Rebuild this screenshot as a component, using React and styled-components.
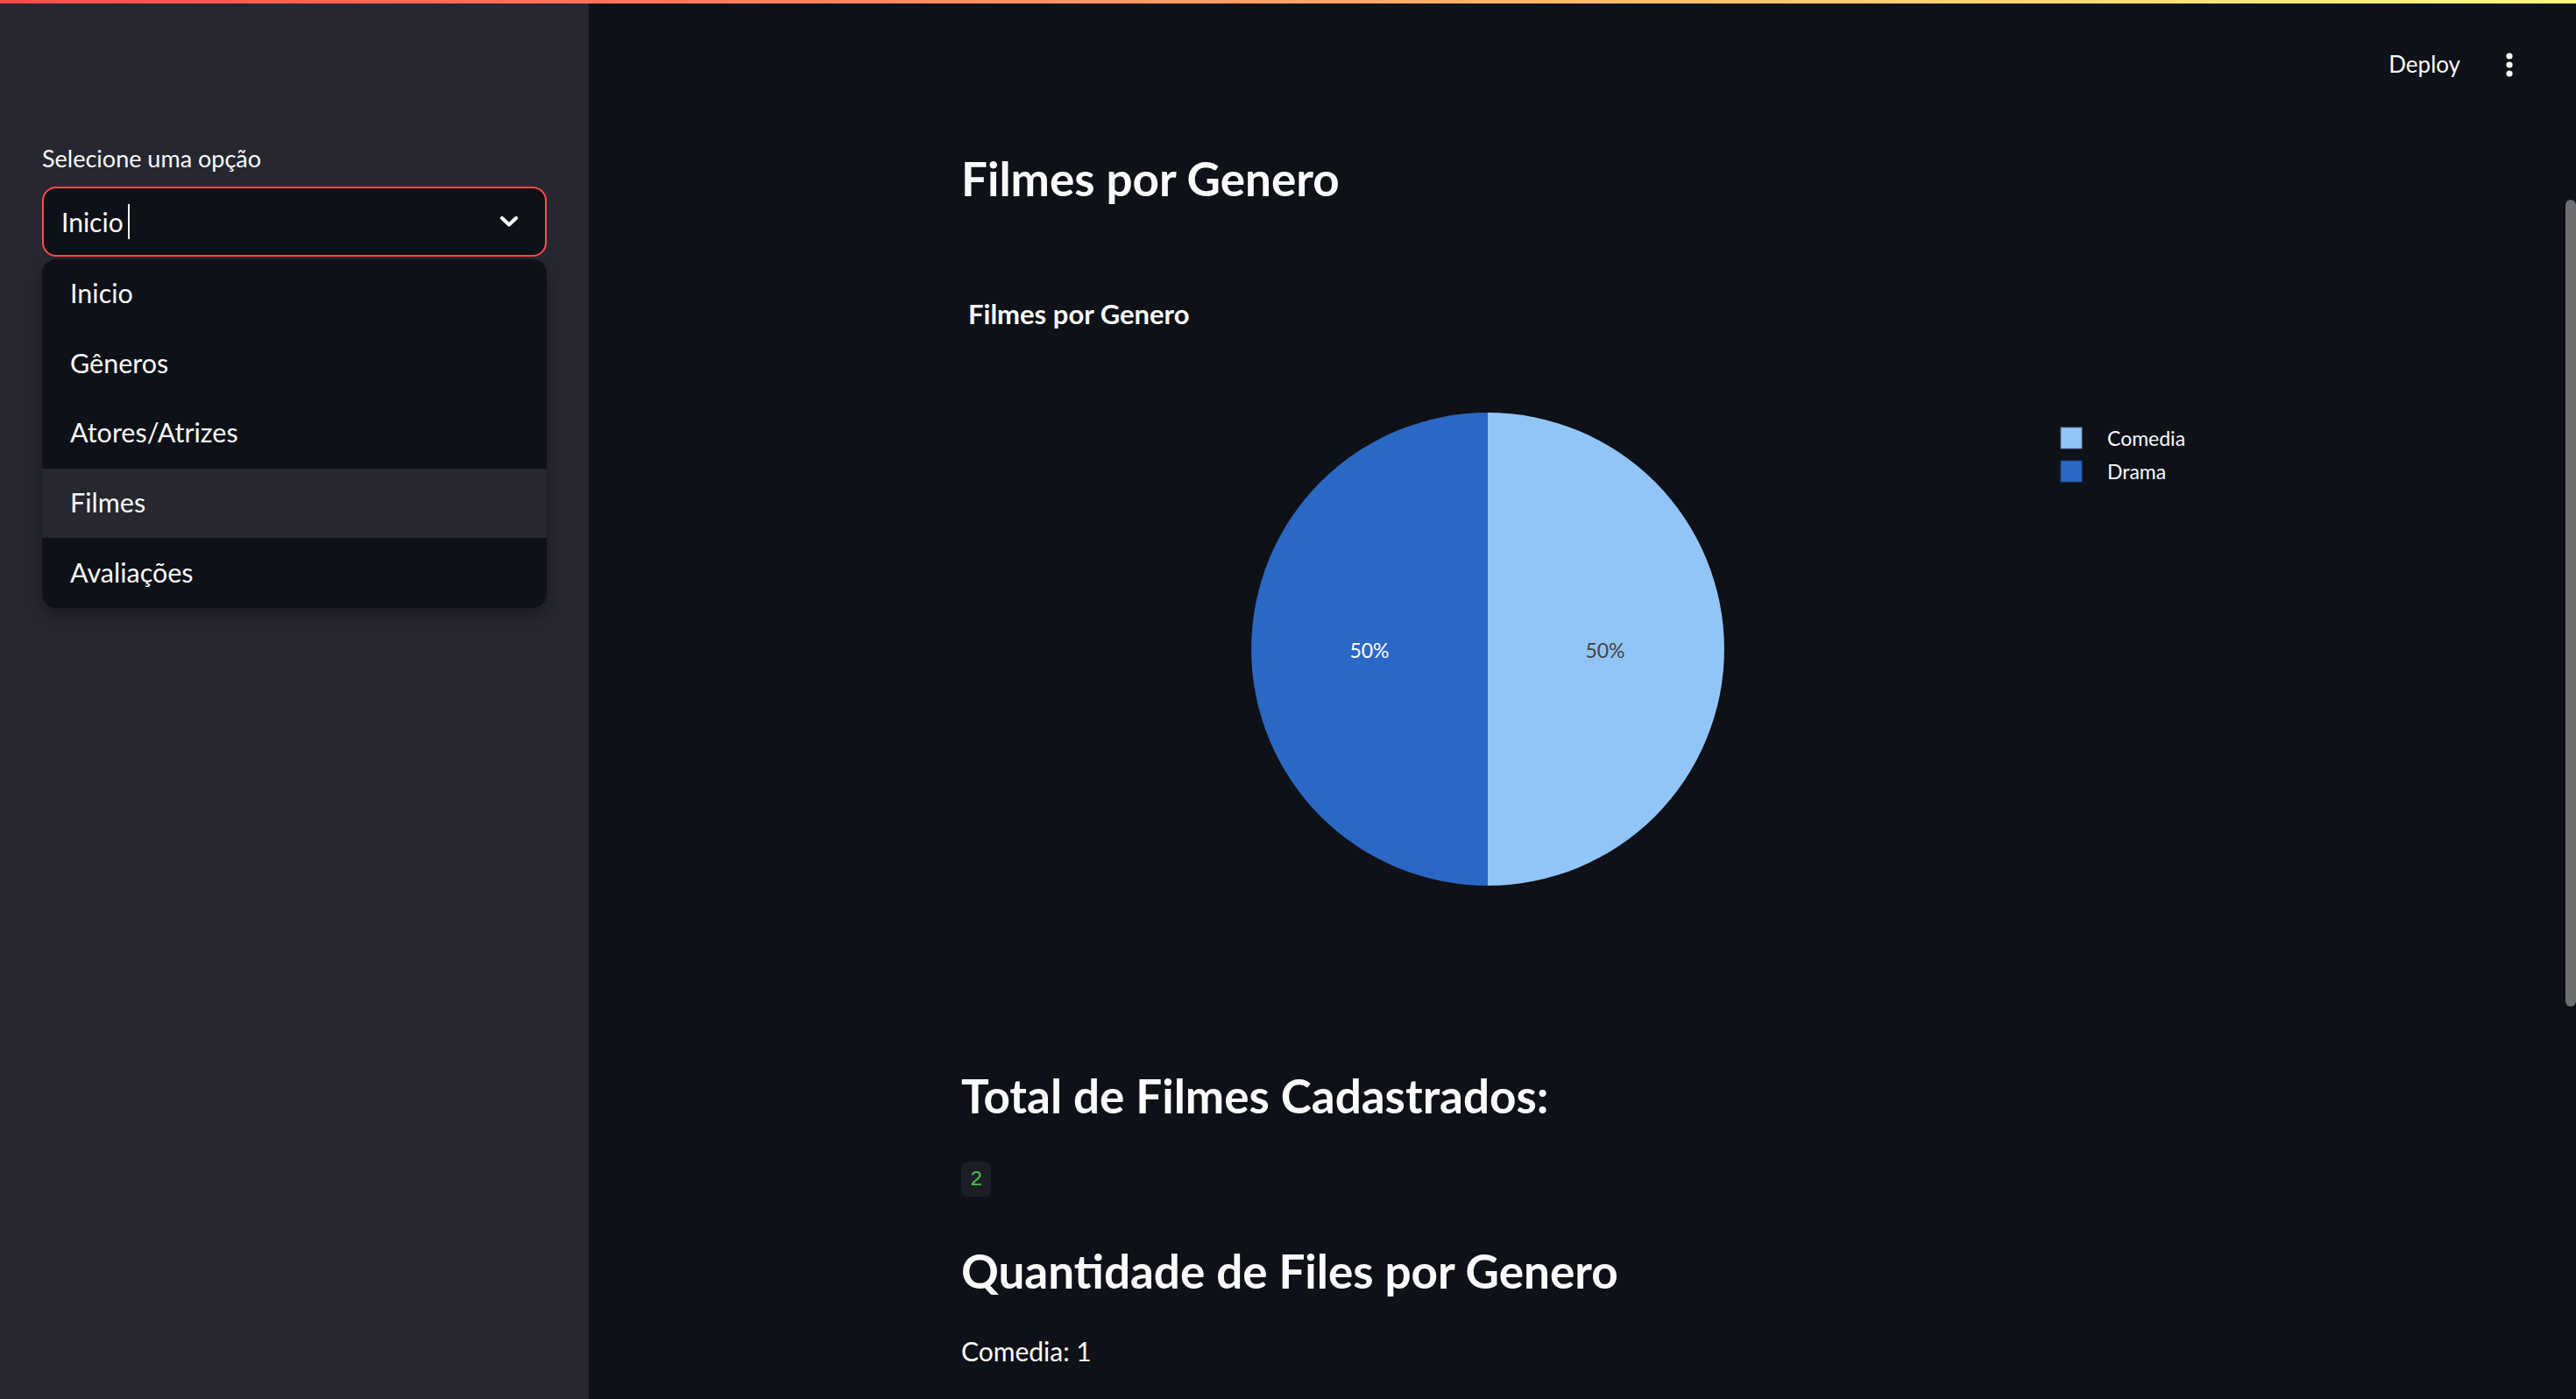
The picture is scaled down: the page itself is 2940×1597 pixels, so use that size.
import React from "react";
import styled, { createGlobalStyle } from "styled-components";

const GlobalStyle = createGlobalStyle`
  html, body { margin: 0; padding: 0; background: #0e1117; }
  body { font-family: Lato, "Noto Sans", sans-serif; color: #fafafa; }
  * { box-sizing: border-box; }
`;

const Page = styled.div`
  width: 2940px;
  height: 1597px;
  overflow: hidden;
  display: flex;
  flex-direction: column;
  background: #0e1117;
`;

const Decoration = styled.div`
  height: 4px;
  flex: none;
  background: linear-gradient(90deg, #ff4b4b, #fffd80);
`;

const Body = styled.div`
  flex: 1;
  display: flex;
  min-height: 0;
`;

const Sidebar = styled.aside`
  width: 672px;
  flex: none;
  background: #262730;
  padding: 157px 48px 0;
`;

const FieldLabel = styled.div`
  font-size: 27px;
  line-height: 40px;
  height: 40px;
  margin-bottom: 12px;
  color: #fafafa;
`;

const SelectWrap = styled.div`
  position: relative;
`;

const SelectBox = styled.div`
  height: 80px;
  border: 2px solid #ff4b4b;
  border-radius: 16px;
  background: #0e1117;
  display: flex;
  align-items: center;
  padding: 0 30px 0 20px;
`;

const SelectValue = styled.span`
  font-size: 30px;
  line-height: 1.2;
  color: #fafafa;
`;

const Caret = styled.span`
  width: 2px;
  height: 40px;
  background: #fafafa;
  margin-left: 5px;
`;

const Spacer = styled.div`
  flex: 1;
`;

const Menu = styled.ul`
  position: absolute;
  left: 0;
  right: 0;
  top: 83px;
  margin: 0;
  padding: 0;
  list-style: none;
  background: #0e1117;
  border-radius: 16px;
  overflow: hidden;
  box-shadow: 0 8px 20px rgba(0, 0, 0, 0.35);
`;

const MenuItem = styled.li`
  height: 79.6px;
  display: flex;
  align-items: center;
  padding-left: 32px;
  padding-bottom: 3px;
  font-size: 30.5px;
  color: #fafafa;
  background: ${(p) => (p.$active ? "#262730" : "transparent")};
`;

const Main = styled.main`
  flex: 1;
  position: relative;
  display: flex;
  flex-direction: column;
  background: #0e1117;
`;

const Header = styled.header`
  height: 139px;
  flex: none;
  display: flex;
  align-items: center;
  justify-content: flex-end;
  padding-right: 56px;
  gap: 36px;
`;

const DeployButton = styled.button`
  background: none;
  border: none;
  padding: 0;
  font-family: Lato, "Noto Sans", sans-serif;
  font-size: 26px;
  line-height: 1.2;
  color: #fafafa;
`;

const KebabButton = styled.button`
  width: 40px;
  height: 40px;
  background: none;
  border: none;
  padding: 0;
  display: flex;
  align-items: center;
  justify-content: center;
`;

const Content = styled.div`
  width: 1418px;
  margin: 0 auto;
  padding-top: 29px;
  display: flex;
  flex-direction: column;
  align-items: flex-start;
`;

const Heading = styled.h3`
  margin: ${(p) => p.$mt || 0}px 0 0;
  font-size: 53px;
  font-weight: 700;
  line-height: 1.2;
  color: #fafafa;
`;

const ChartBox = styled.div`
  width: 1418px;
  height: 900px;
  margin-top: 25px;
`;

const CodeChip = styled.code`
  margin-top: 44px;
  height: 40px;
  padding: 0 10px;
  display: inline-flex;
  align-items: center;
  border-radius: 8px;
  background: #1c1e26;
  color: #4cbc50;
  font-family: "Liberation Mono", "DejaVu Sans Mono", monospace;
  font-size: 24px;
`;

const Paragraph = styled.p`
  margin: 35px 0 0;
  font-size: 30px;
  line-height: 48px;
  color: #fafafa;
`;

const ScrollThumb = styled.div`
  position: absolute;
  right: 0;
  top: 224px;
  width: 12px;
  height: 921px;
  border-radius: 6px;
  background: #6d6e72;
`;

function PieChart() {
  const cx = 601;
  const cy = 480;
  const r = 270;
  const font = "Lato, 'Noto Sans', sans-serif";
  return (
    <svg width="1418" height="900" viewBox="0 0 1418 900">
      <text x="8" y="109" fill="#fafafa" fontFamily={font} fontSize="31" fontWeight="700">
        Filmes por Genero
      </text>
      <path d={`M ${cx} ${cy - r} A ${r} ${r} 0 0 1 ${cx} ${cy + r} Z`} fill="#92c5f7" />
      <path d={`M ${cx} ${cy + r} A ${r} ${r} 0 0 1 ${cx} ${cy - r} Z`} fill="#2b67c4" />
      <text x="466" y="490" textAnchor="middle" fill="#ffffff" fontFamily={font} fontSize="23">
        50%
      </text>
      <text x="735" y="490" textAnchor="middle" fill="#444444" fontFamily={font} fontSize="23">
        50%
      </text>
      <rect x="1255" y="227" width="24" height="24" fill="#92c5f7" stroke="#5a7fa8" strokeWidth="1" />
      <rect x="1255" y="265" width="24" height="24" fill="#2b67c4" stroke="#1f4a8c" strokeWidth="1" />
      <text x="1308" y="248" fill="#fafafa" fontFamily={font} fontSize="23">
        Comedia
      </text>
      <text x="1308" y="286" fill="#fafafa" fontFamily={font} fontSize="23">
        Drama
      </text>
    </svg>
  );
}

const options = ["Inicio", "Gêneros", "Atores/Atrizes", "Filmes", "Avaliações"];

export default function App() {
  return (
    <>
      <GlobalStyle />
      <Page>
        <Decoration />
        <Body>
          <Sidebar>
            <FieldLabel>Selecione uma opção</FieldLabel>
            <SelectWrap>
              <SelectBox>
                <SelectValue>Inicio</SelectValue>
                <Caret />
                <Spacer />
                <svg width="22" height="14" viewBox="0 0 22 14">
                  <polyline
                    points="3,3 11,10.5 19,3"
                    fill="none"
                    stroke="#fafafa"
                    strokeWidth="4.2"
                    strokeLinecap="round"
                    strokeLinejoin="round"
                  />
                </svg>
              </SelectBox>
              <Menu>
                {options.map((o) => (
                  <MenuItem key={o} $active={o === "Filmes"}>
                    {o}
                  </MenuItem>
                ))}
              </Menu>
            </SelectWrap>
          </Sidebar>
          <Main>
            <Header>
              <DeployButton>Deploy</DeployButton>
              <KebabButton aria-label="menu">
                <svg width="10" height="28" viewBox="0 0 10 28">
                  <circle cx="5" cy="4" r="3.6" fill="#fafafa" />
                  <circle cx="5" cy="14" r="3.6" fill="#fafafa" />
                  <circle cx="5" cy="24" r="3.6" fill="#fafafa" />
                </svg>
              </KebabButton>
            </Header>
            <Content>
              <Heading>Filmes por Genero</Heading>
              <ChartBox>
                <PieChart />
              </ChartBox>
              <Heading $mt={58}>Total de Filmes Cadastrados:</Heading>
              <CodeChip>2</CodeChip>
              <Heading $mt={53}>Quantidade de Files por Genero</Heading>
              <Paragraph>Comedia: 1</Paragraph>
            </Content>
            <ScrollThumb />
          </Main>
        </Body>
      </Page>
    </>
  );
}
